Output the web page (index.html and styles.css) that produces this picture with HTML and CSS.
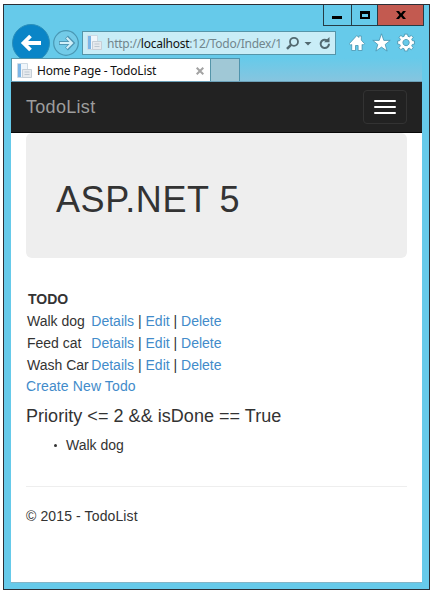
FILE: index.html
```html
<!DOCTYPE html>
<html lang="en">
<head>
<meta charset="utf-8">
<title>Home Page - TodoList</title>
<link rel="stylesheet" href="styles.css">
</head>
<body>
<div class="window">
  <div class="titlebar">
    <div class="controls">
      <span class="control minimize"><svg width="27" height="20" shape-rendering="crispEdges"><path d="M8 11h10v3H8z"/></svg></span>
      <span class="control maximize"><svg width="25" height="20" shape-rendering="crispEdges"><path fill-rule="evenodd" d="M8 6h10v8H8zM10 9v3h6V9z"/></svg></span>
      <span class="control close"><svg width="45" height="20"><path d="M18 6h3l2 2.6L25 6h3l-3.3 4 3.3 4h-3l-2-2.6-2 2.6h-3l3.3-4z"/></svg></span>
    </div>
  </div>
  <div class="toolbar">
    <svg class="nav-buttons" width="71" height="40" viewBox="0 0 71 40">
      <circle cx="20" cy="19" r="18.5" fill="#0a85c7" stroke="#2b8fba"/>
      <path d="M30 19H12M19.5 12l-7 7 7 7" fill="none" stroke="#fff" stroke-width="3.8"/>
      <circle cx="55" cy="19" r="12.3" fill="#73cbe8" stroke="#4a98b4" stroke-width="1.2"/>
      <path d="M48 19h13M55.5 13l6 6-6 6" fill="none" stroke="#5097b4" stroke-width="4"/>
      <path d="M48.8 19h12M55.7 13.7l5.3 5.3-5.3 5.3" fill="none" stroke="#d2f0f9" stroke-width="2"/>
    </svg>
    <div class="address">
      <svg class="page-icon" width="16" height="16" viewBox="0 0 16 16"><path d="M.5.5h10v14H.5z" fill="#f0f6fb" stroke="#cddae4"/><path d="M1 1h3v13H1z" fill="#7db5e6"/><path d="M5.5 6.5h9v8h-9z" fill="#e6eaee" stroke="#c6cfd7"/><path d="M7.5 9h5M7.5 11.5h5" stroke="#bcc7d1"/></svg>
      <span class="url">http://<b>localhost</b>:12/Todo/Index/1</span>
      <svg class="address-icons" width="50" height="22" viewBox="0 0 50 22" fill="none" stroke="#526970">
        <circle cx="13" cy="9.8" r="4" stroke-width="1.8"/><path d="M10 12.8L6 16.8" stroke-width="2.4"/>
        <path d="M23.5 10h7L27 13.5z" fill="#526970" stroke="none"/>
        <path d="M45.8 8.2a4.2 4.2 0 1 0 2.2 3.6" stroke-width="2"/><path d="M43 10.2h5.5V5z" fill="#526970" stroke="none"/>
      </svg>
    </div>
    <svg class="commands" width="72" height="22" viewBox="0 0 72 22" fill="#fff" stroke="#4593ae" stroke-width=".8">
      <path d="M.3 11.7L7.8 3.5l2 2V4h2.5v4.1l3.2 3.6-1.5 1.5-.9-.8V18.5h-4v-5H6.5v5H2.7v-6l-.9.8z"/>
      <path d="M32.5 1.8l2.3 6.6h6.4l-5 4.1 1.9 6.6-5.6-4-5.6 4 1.9-6.6-5-4.1h6.4z"/>
      <path transform="translate(-3 -1) scale(1.05)" fill-rule="evenodd" d="M55.7 3h3l.3 2 1.3.6 1.8-1.4 1.9 1.9-1.4 1.8.6 1.3 2 .3v3l-2 .3-.6 1.3 1.4 1.8-1.9 1.9-1.8-1.4-1.3.6-.3 2h-3l-.3-2-1.3-.6-1.8 1.4-1.9-1.9 1.4-1.8-.6-1.3-2-.3v-3l2-.3.6-1.3-1.4-1.8 1.9-1.9 1.8 1.4 1.3-.6zM57.2 8a3 3 0 1 0 .01 0z"/>
    </svg>
  </div>
  <div class="tabs">
    <div class="tab">
      <svg class="page-icon" width="16" height="16" viewBox="0 0 16 16"><path d="M.5.5h10v14H.5z" fill="#f0f6fb" stroke="#cddae4"/><path d="M1 1h3v13H1z" fill="#7db5e6"/><path d="M5.5 6.5h9v8h-9z" fill="#e6eaee" stroke="#c6cfd7"/><path d="M7.5 9h5M7.5 11.5h5" stroke="#bcc7d1"/></svg>
      <span class="tab-title">Home Page - TodoList</span>
      <svg class="tab-close" width="8" height="8" viewBox="0 0 8 8"><path d="M.7.7l6.6 6.6M7.3.7L.7 7.3" stroke="#a3a3a3" stroke-width="2"/></svg>
    </div>
    <div class="new-tab"></div>
  </div>
  <div class="page">
    <header class="navbar">
      <span class="brand">TodoList</span>
      <div class="toggle"><i></i><i></i><i></i></div>
    </header>
    <main class="container">
      <div class="jumbotron"><h1>ASP.NET 5</h1></div>
      <table>
        <tr><th>TODO</th><th></th></tr>
        <tr><td>Walk dog</td><td><a>Details</a> | <a>Edit</a> | <a>Delete</a></td></tr>
        <tr><td>Feed cat</td><td><a>Details</a> | <a>Edit</a> | <a>Delete</a></td></tr>
        <tr><td>Wash Car</td><td><a>Details</a> | <a>Edit</a> | <a>Delete</a></td></tr>
      </table>
      <div class="create"><a>Create New Todo</a></div>
      <h4>Priority &lt;= 2 &amp;&amp; isDone == True</h4>
      <ul><li>Walk dog</li></ul>
      <hr>
      <footer>© 2015 - TodoList</footer>
    </main>
  </div>
</div>
</body>
</html>
```
FILE: styles.css
```css
* { box-sizing: border-box; }
body {
  margin: 0;
  padding: 4px 5px 5px 3px;
  height: 595px;
  background: #fff;
  overflow: hidden;
  font: 14px/20px "Liberation Sans", Arial, sans-serif;
  color: #333;
}
svg { display: block; flex: none; }
.window {
  width: 427px;
  height: 586px;
  border: 1px solid #2b2f36;
  padding: 0 7px 6px;
  background: #66caea;
  display: flex;
  flex-direction: column;
}
.titlebar { height: 21px; display: flex; justify-content: flex-end; margin-right: -2px; }
.controls { display: flex; height: 21px; border: 1px solid #253c46; border-top: 0; }
.control + .control { border-left: 1px solid #253c46; }
.close { background: #c35a50; }
.toolbar { height: 32px; display: flex; align-items: flex-start; }
.nav-buttons { margin-top: -2px; }
.address {
  width: 254px;
  height: 24px;
  margin-top: 5px;
  padding-left: 4px;
  border: 1px solid #5595a9;
  background: #c9edf7;
  display: flex;
  align-items: center;
}
.url {
  width: 174px;
  margin-left: 4px;
  padding-top: 1px;
  font: 12px/20px "Noto Sans", sans-serif;
  letter-spacing: -.25px;
  white-space: nowrap;
  color: #71868d;
}
.url b { font-weight: 400; color: #111; }
.commands { margin: 6px 0 0 13px; }
.tabs {
  height: 24px;
  display: flex;
  border-bottom: 1px solid #6ba0b8;
  background: linear-gradient(#66caea, #86c5df);
}
.tab {
  width: 200px;
  padding: 1px 6px 0 5px;
  border: 1px solid #5595a9;
  border-bottom: 0;
  background: #fff;
  display: flex;
  align-items: center;
}
.tab-title {
  margin-left: 4px;
  font: 12px/20px "Noto Sans", sans-serif;
  letter-spacing: -.18px;
  color: #111;
  white-space: nowrap;
}
.tab-close { margin-left: auto; }
.new-tab { width: 29px; border: 1px solid #4f94ad; border-left: 0; border-bottom: 0; background: #a0c8d6; }
.page { flex: 1; background: #fff; border-bottom: 1px solid #83b5c7; }
.navbar {
  height: 51px;
  padding: 0 15px;
  background: #222;
  border-bottom: 1px solid #080808;
  display: flex;
  align-items: center;
  justify-content: space-between;
}
.brand { font-size: 18px; letter-spacing: .3px; color: #9d9d9d; }
.toggle {
  width: 44px;
  height: 34px;
  padding: 9px 10px;
  border: 1px solid #333;
  border-radius: 4px;
  display: grid;
  gap: 4px;
}
.toggle i { height: 2px; background: #fff; border-radius: 1px; }
.container { padding: 0 15px; }
.jumbotron { height: 125px; padding: 47px 30px 0; border-radius: 6px; background: #eee; margin-bottom: 30px; }
h1 { margin: 0; font: 36px/40px "Liberation Sans", Arial, sans-serif; letter-spacing: .6px; }
table { border-collapse: collapse; border-spacing: 0; white-space: nowrap; }
td, th { padding: 1px; line-height: 20px; }
td + td { padding-left: 1.6px; }
th { text-align: left; padding-left: 2px; height: 22px; }
.create { letter-spacing: .12px; }
a { color: #428bca; }
h4 { margin: 10px 0 9px; padding-top: 1px; font-size: 18px; font-weight: 400; line-height: 19px; letter-spacing: .04px; }
ul { margin: 0 0 10px; padding: 0; list-style: none; }
li { display: flex; align-items: center; padding-left: 28px; }
li::before { content: ""; width: 3px; height: 3px; margin-right: 9px; border-radius: 50%; background: #333; }
hr { margin: 31px 0 19px; border: 0; border-top: 1px solid #eee; }
footer { letter-spacing: .12px; }
```
